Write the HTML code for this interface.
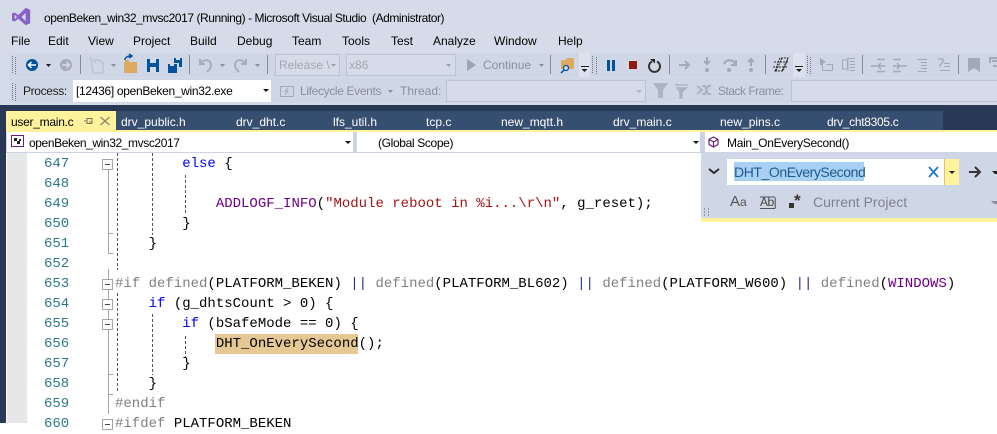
<!DOCTYPE html>
<html><head><meta charset="utf-8"><style>
html,body{margin:0;padding:0}
body{width:997px;height:423px;overflow:hidden;position:relative;background:#fff;font-family:"Liberation Sans",sans-serif;font-size:12px;color:#000}
.a,.t,.c,.n{position:absolute;white-space:pre}
.t{line-height:16px}
.g{color:#8a8f9b}
.c{font-family:"Liberation Mono",monospace;font-size:14px;line-height:20px;left:115px;color:#000}
.n{font-family:"Liberation Mono",monospace;font-size:14px;line-height:20px;left:44px;color:#2b7a8b}
.k{color:#0000ff}.m{color:#6f008a}.s{color:#a31515}.p{color:#808080}
svg{position:absolute;overflow:visible}
.tab{position:absolute;top:115px;line-height:14px;color:#fff;white-space:pre}
</style></head><body>
<div class="a" style="left:0;top:0;width:997px;height:105px;background:#d6dbe9"></div>
<div class="a" style="left:9px;top:53px;width:988px;height:24px;background:#cfd6e5"></div>
<div class="a" style="left:9px;top:78px;width:988px;height:25px;background:#cfd6e5"></div>
<div class="a" style="left:0;top:105px;width:997px;height:318px;background:#293955"></div>
<div class="a" style="left:116px;top:111px;width:827px;height:19px;background:#364e6f"></div>

<svg style="left:12px;top:7px" width="20" height="20" viewBox="0 0 22 22"><path d="M0 7l3-1 4 3 8-8 5 2v15l-5 2-8-7-4 3-3-1z" fill="#8662c5"/><path d="M3 8.500v5l2.500-2.500zM15 6.500l-4.500 4.500 4.500 4.500z" fill="#d6dbe9"/></svg>
<span class="t" style="left:44px;top:10px;font-size:12px;letter-spacing:-.44px">openBeken_win32_mvsc2017 (Running) - Microsoft Visual Studio  (Administrator)</span>

<span class="t" style="left:11px;top:33px">File</span>
<span class="t" style="left:48px;top:33px">Edit</span>
<span class="t" style="left:88px;top:33px">View</span>
<span class="t" style="left:133px;top:33px">Project</span>
<span class="t" style="left:190px;top:33px">Build</span>
<span class="t" style="left:237px;top:33px">Debug</span>
<span class="t" style="left:292px;top:33px">Team</span>
<span class="t" style="left:342px;top:33px">Tools</span>
<span class="t" style="left:391px;top:33px">Test</span>
<span class="t" style="left:433px;top:33px">Analyze</span>
<span class="t" style="left:494px;top:33px">Window</span>
<span class="t" style="left:558px;top:33px">Help</span>

<svg style="left:0;top:53px" width="997" height="52" viewBox="0 53 997 52">
<g fill="none" stroke="#6f7682" stroke-width="1" stroke-dasharray="1 1"><path d="M12.500 56v18M15.500 57v18M12.500 83v18M15.500 84v18M592.500 56v18M596.500 57v18M807.500 56v18M810.500 57v18"/></g>
<circle cx="32" cy="65" r="6" fill="#00539c"/><path d="M36 65h-7M31.500 62l-3 3 3 3" stroke="#fff" stroke-width="1.500" fill="none"/>
<path d="M46 64h5l-2.500 3z" fill="#1e1e1e"/>
<circle cx="66" cy="65" r="6" fill="#a6abb5"/><path d="M62 65h7M66.500 62l3 3-3 3" stroke="#d6dbe9" stroke-width="1.500" fill="none"/>
<path d="M80.500 55v19" stroke="#868c98" fill="none"/>
<path d="M91 60h8l4 3v10h-10z M95 60v3" stroke="#b4bac5" fill="none"/><path d="M90 55v6M87 58h6" stroke="#b4bac5" stroke-dasharray="1 1"/>
<path d="M111 64h5l-2.500 3z" fill="#8a8f9b"/>
<path d="M124 62h13v11h-13z" fill="#dcaa60"/><path d="M125 60h4v2h-4z" fill="#dcaa60"/><path d="M125 60c0-3 3-4 6-4M129 54l3 2-3 2" stroke="#00539c" stroke-width="1.500" fill="none"/>
<path d="M147 59h12v13h-12z" fill="#00539c"/><path d="M150 59h6v4h-6zM150 67h6v5h-6z" fill="#d6dbe9"/>
<path d="M168 64h9v9h-9z M174 58h8v9h-3v-4h-5z" fill="#00539c"/><path d="M170 64h4v2h-4zM176 58h4v2h-4z" fill="#d6dbe9"/>
<path d="M189.500 55v19" stroke="#868c98"/>
<path d="M200 59v5h5M201 63c4-5 10-3 10 2 0 3-2 5-4 7" stroke="#a8aeb8" stroke-width="2" fill="none"/>
<path d="M220 64h5l-2.500 3z" fill="#8a8f9b"/>
<path d="M246 59v5h-5M245 63c-4-5-10-3-10 2 0 3 2 5 4 7" stroke="#a8aeb8" stroke-width="2" fill="none"/>
<path d="M255 64h5l-2.500 3z" fill="#8a8f9b"/>
<path d="M267.500 55v19" stroke="#868c98"/>
<path d="M275.500 54.500h64v21h-64zM346.500 54.500h109v21h-109z" fill="#d6dbe9" stroke="#bdc3d0"/>
<path d="M331 64h5l-2.500 3zM446 64h5l-2.500 3z" fill="#9aa0ac"/>
<path d="M467 59l9 6-9 6z" fill="#9ea3af"/>
<path d="M539 64h5l-2.500 3z" fill="#8a8f9b"/>
<path d="M550.500 55v19" stroke="#868c98"/>
<path d="M561 60h5l1-2h7v11h-13z" fill="#dcaa60"/><circle cx="566" cy="68" r="2.500" fill="#d6dbe9" stroke="#00539c" stroke-width="1.300"/><path d="M564 70l-3 3" stroke="#00539c" stroke-width="1.500"/>
<rect x="579" y="53" width="11" height="24" fill="#dde1ee"/><path d="M581 66.500h8" stroke="#1e1e1e"/><path d="M581.500 69h6l-3 3z" fill="#1e1e1e"/>
<path d="M607 60h3v11h-3zM612 60h3v11h-3z" fill="#00539c"/>
<rect x="629" y="61" width="8" height="8" fill="#8f1a0e"/>
<path d="M652 61.500a5.500 5.500 0 1 0 5 0" stroke="#333" stroke-width="2" fill="none"/><path d="M650 59l5 0 0 4.500z" fill="#222"/>
<path d="M669.500 55v19" stroke="#868c98"/>
<path d="M679 65h10M685 61l4 4-4 4" stroke="#a4aab5" stroke-width="2" fill="none"/>
<path d="M707 57v7M704 61l3 3 3-3" stroke="#a4aab5" stroke-width="2" fill="none"/><circle cx="707" cy="70" r="2" fill="#a4aab5"/>
<path d="M724 64c2-5 9-5 11 0M736 60v5h-5" stroke="#a4aab5" stroke-width="2" fill="none"/><circle cx="729" cy="70" r="2" fill="#a4aab5"/>
<path d="M751 66v-7M748 62l3-3 3 3" stroke="#a4aab5" stroke-width="2" fill="none"/><circle cx="751" cy="70" r="2" fill="#a4aab5"/>
<path d="M765.500 55v19" stroke="#868c98"/>
<path d="M775 71l5-13h8l-5 13zM774 62h15M773 67h14M782 58l-6 13M788 58l-6 13" stroke="#2a2a2a" fill="none" stroke-dasharray="2 1"/>
<rect x="793" y="53" width="12" height="24" fill="#dde1ee"/><path d="M795 66.500h8" stroke="#1e1e1e"/><path d="M796 69h6l-3 3z" fill="#1e1e1e"/>
<path d="M820 58l6 4-3 1v2h-3z" fill="#a4aab5"/><path d="M822.500 65v5.500h10v-6h-6" stroke="#a4aab5" fill="none"/>
<path d="M842.500 60h5v9h-5zM847 58.500h8M850 61.500h5M850 64.500h5M850 67.500h5M850 70.500h5M848 58.500v12" stroke="#a4aab5" fill="none"/>
<path d="M862.500 55v19" stroke="#868c98"/>
<path d="M877 59.500h8M877 71.500h8M871 66h6M879 66h6M881 63l-3 3 3 3" stroke="#a4aab5" stroke-width="1.500" fill="none"/>
<path d="M893 59.500h8M893 71.500h8M901 66h6M893 66h7M897 63l3 3-3 3" stroke="#a4aab5" stroke-width="1.500" fill="none"/>
<path d="M917 59.500h10M921 62.500h6M921 65.500h6M921 68.500h6M918 71.500h9" stroke="#a4aab5" fill="none"/>
<path d="M938 59h5v3l-3 3v2" stroke="#a4aab5" fill="none" stroke-width="1.300"/><path d="M944 63.500h6M944 66.500h6M940 70.500h10" stroke="#a4aab5" fill="none"/>
<path d="M958.500 55v19" stroke="#868c98"/>
<path d="M968 58h12v14l-6-4-6 4z" fill="#a4aab5"/>
<path d="M997 58h-7v5M992 61h5M993 66h4" stroke="#a4aab5" stroke-width="2" fill="none"/>

<path d="M280.500 86.500h13v10h-13z" fill="none" stroke="#a4aab5"/><path d="M288 88l-3 3h3l-3 4" stroke="#a4aab5" fill="none"/>
<path d="M388 90h5l-2.500 3z" fill="#8a8f9b"/>
<path d="M446.500 80.500h199v21h-199z" fill="#d6dbe9" stroke="#bdc3d0"/>
<path d="M636 90h6l-3 3z" fill="#b0b6c2"/>
<path d="M653 83h15l-5 7v8h-5v-8z" fill="#adb3bf"/>
<path d="M675 85h13M677 88h9l-4 4v6h-2v-6z" stroke="#adb3bf" stroke-width="1.500" fill="#adb3bf"/>
<path d="M697 86l5 4-5 4M702 86h3l3 8h3M711 86h-3l-3 8h-3" stroke="#adb3bf" stroke-width="2" fill="none"/>
<path d="M791.500 80.500h220v21h-220z" fill="#d6dbe9" stroke="#bdc3d0"/>
</svg>

<span class="t g" style="left:279px;top:57px;color:#a2a7b2">Release \</span>
<span class="t g" style="left:349px;top:57px;color:#a2a7b2">x86</span>
<span class="t g" style="left:483px;top:57px">Continue</span>

<span class="t" style="left:23px;top:83px;color:#1e1e1e;letter-spacing:-.35px">Process:</span>
<div class="a" style="left:73px;top:80px;width:198px;height:22px;background:#fff"></div>
<span class="t" style="left:76px;top:83px;letter-spacing:-.31px">[12436] openBeken_win32.exe</span>
<svg style="left:263px;top:89px" width="6" height="4"><path d="M0 0h6l-3 3z" fill="#111"/></svg>
<span class="t g" style="left:300px;top:83px;letter-spacing:-.35px">Lifecycle Events</span>
<span class="t g" style="left:400px;top:83px">Thread:</span>
<span class="t g" style="left:718px;top:83px;letter-spacing:-.5px">Stack Frame:</span>

<div class="a" style="left:6px;top:111px;width:110px;height:19px;background:#fff29d"></div>
<span class="t" style="left:11px;top:114px;letter-spacing:-.27px">user_main.c</span>
<svg style="left:83px;top:115px" width="28" height="12" viewBox="0 0 28 12"><path d="M1 6h3M4 3.500h5v5h-5zM4 3v6M9 7h-3" stroke="#7d775a" fill="none"/><path d="M17.500 2l9 8M26.500 2l-9 8" stroke="#8a8568" stroke-width="1.300" fill="none"/></svg>
<span class="tab" style="left:121px">drv_public.h</span>
<span class="tab" style="left:236px">drv_dht.c</span>
<span class="tab" style="left:333px">lfs_util.h</span>
<span class="tab" style="left:426px">tcp.c</span>
<span class="tab" style="left:501px">new_mqtt.h</span>
<span class="tab" style="left:613px">drv_main.c</span>
<span class="tab" style="left:720px">new_pins.c</span>
<span class="tab" style="left:827px;letter-spacing:-.3px">drv_cht8305.c</span>

<div class="a" style="left:6px;top:130px;width:991px;height:2px;background:#fff29d"></div>
<div class="a" style="left:6px;top:132px;width:991px;height:21px;background:#cdd3e2"></div>
<div class="a" style="left:7px;top:132px;width:346px;height:20px;background:#fff"></div>
<div class="a" style="left:357px;top:132px;width:343px;height:20px;background:#fff"></div>
<div class="a" style="left:705px;top:132px;width:292px;height:20px;background:#fff"></div>
<svg style="left:11px;top:135px" width="14" height="13" viewBox="0 0 14 13"><rect x=".5" y=".5" width="12" height="11" fill="#fff" stroke="#68217a"/><path d="M3 3h3v3h-3zM6 6h3v3h-3zM8 4h2v2h-2z" fill="#222"/></svg>
<span class="t" style="left:29px;top:135px;letter-spacing:-.4px">openBeken_win32_mvsc2017</span>
<svg style="left:345px;top:141px" width="6" height="4"><path d="M0 0h6l-3 3z" fill="#111"/></svg>
<span class="t" style="left:378px;top:135px;letter-spacing:-.35px">(Global Scope)</span>
<svg style="left:693px;top:141px" width="6" height="4"><path d="M0 0h6l-3 3z" fill="#111"/></svg>
<svg style="left:708px;top:136px" width="12" height="12" viewBox="0 0 12 12"><path d="M5.500 1l4.500 2.500v5l-4.500 2.500-4.500-2.500v-5zM1 3.500l4.500 2.500 4.500-2.500M5.500 6v5" fill="none" stroke="#68217a" stroke-width="1.200"/></svg>
<span class="t" style="left:727px;top:135px;letter-spacing:-.3px">Main_OnEverySecond()</span>

<!-- editor -->
<div class="a" style="left:6px;top:153px;width:991px;height:270px;background:#fff"></div>
<div class="a" style="left:7px;top:153px;width:20px;height:270px;background:#e6e7e8"></div>

<div class="n" style="top:154px">647
648
649
650
651
652
653
654
655
656
657
658
659
660</div>

<svg style="left:0;top:153px" width="400" height="270" viewBox="0 153 400 270">
<g fill="none" stroke="#a5a5a5">
<path d="M108.500 169v85M108.500 269v10M108.500 289v10M108.500 309v10M108.500 329v85M108.500 233.500h5M108.500 253.500h5M108.500 374.500h5M108.500 394.500h5"/>
</g>
<g fill="#fff" stroke="#a5a5a5"><rect x="102.500" y="159.500" width="10" height="10"/><rect x="102.500" y="279.500" width="10" height="10"/><rect x="102.500" y="299.500" width="10" height="10"/><rect x="102.500" y="319.500" width="10" height="10"/><rect x="102.500" y="419.500" width="10" height="10"/></g>
<path d="M105 164.500h5M105 284.500h5M105 304.500h5M105 324.500h5M105 424.500h5" stroke="#444"/>
<g fill="none" stroke="#555" stroke-dasharray="3 2">
<path d="M117.500 153v117M152.500 153v82M185.500 175v38M117.500 293v99M152.500 314v61M185.500 336v22"/>
</g>
</svg>
<div class="a" style="left:215px;top:334px;width:143px;height:20px;background:#e5c893"></div>

<div class="c" style="top:154px"><span class="k">        else</span> {</div>
<div class="c" style="top:194px">            <span class="m">ADDLOGF_INFO</span>(<span class="s">"Module reboot in %i...\r\n"</span>, g_reset);</div>
<div class="c" style="top:214px">        }</div>
<div class="c" style="top:234px">    }</div>
<div class="c" style="top:274px"><span class="p">#if defined</span>(PLATFORM_BEKEN) <span style="color:#2a2a8a">||</span> <span class="p">defined</span>(PLATFORM_BL602) <span style="color:#2a2a8a">||</span> <span class="p">defined</span>(PLATFORM_W600) <span style="color:#2a2a8a">||</span> <span class="p">defined</span>(<span class="m">WINDOWS</span>)</div>
<div class="c" style="top:294px"><span class="k">    if</span> (g_dhtsCount &gt; 0) {</div>
<div class="c" style="top:314px"><span class="k">        if</span> (bSafeMode == 0) {</div>
<div class="c" style="top:334px">            DHT_OnEverySecond();</div>
<div class="c" style="top:354px">        }</div>
<div class="c" style="top:374px">    }</div>
<div class="c" style="top:394px"><span class="p">#endif</span></div>
<div class="c" style="top:414px"><span class="p">#ifdef</span> PLATFORM_BEKEN</div>

<!-- find panel -->
<div class="a" style="left:701px;top:153px;width:296px;height:65px;background:#cfd6e5"></div>
<div class="a" style="left:701px;top:218px;width:296px;height:4px;background:#fff29d"></div>
<div class="a" style="left:727px;top:159px;width:217px;height:26px;background:#fff"></div>
<div class="a" style="left:944px;top:159px;width:15px;height:26px;background:#fff29d;border-left:1px solid #e5c365;box-sizing:border-box"></div>
<div class="a" style="left:734px;top:162px;width:130px;height:19px;background:#a8d0f5"></div>
<span class="t" style="left:734px;top:164px;font-size:14px;color:#1e5a8e;letter-spacing:-.42px">DHT_OnEverySecond</span>
<svg style="left:0;top:153px" width="997" height="70" viewBox="0 153 997 70">
<path d="M709 169l5 4 5-4" stroke="#2a2a2a" stroke-width="2" fill="none"/>
<path d="M929 167l9 10M938 167l-9 10" stroke="#1e78c8" stroke-width="1.800" fill="none"/>
<path d="M949 171h6l-3 3z" fill="#222"/>
<path d="M969 172h11M975 167l5 5-5 5" stroke="#333" stroke-width="2" fill="none"/>
<path d="M992 171h5v3h-2z" fill="#222"/>
<path d="M704 209h1M708 209h1M704 212h1M708 212h1M704 215h1M708 215h1" stroke="#555"/>
<path d="M760 197h15M760 208.500h15" stroke="#555"/>
<path d="M789 203h5v5h-5z" fill="#333"/>
<path d="M991 201h6v3h-3z" fill="#8a8f9b"/>
</svg>
<span class="t" style="left:730px;top:194px;font-size:15px;color:#555">A<span style="font-size:12px">a</span></span>
<span class="t" style="left:760px;top:194px;font-size:12px;color:#444;letter-spacing:-.5px">Ab|</span>
<span class="t" style="left:794px;top:193px;font-size:17px;color:#333;font-weight:bold">*</span>
<span class="t" style="left:813px;top:194px;font-size:14px;color:#7e838e">Current Project</span>
</body></html>
